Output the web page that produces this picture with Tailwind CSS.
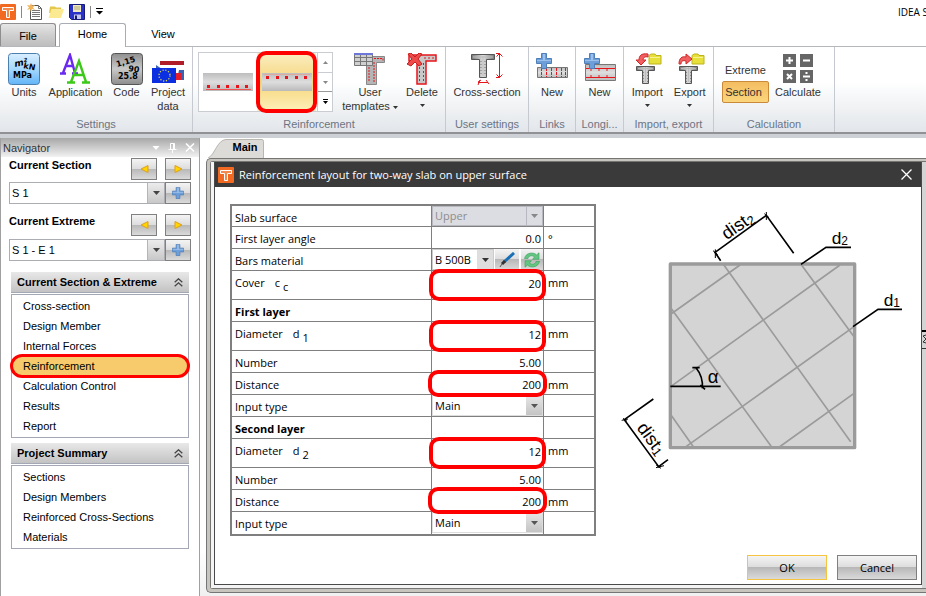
<!DOCTYPE html>
<html lang="en">
  <head>
    <meta charset="UTF-8" />
    <meta name="viewport" content="width=device-width, initial-scale=1.0" />
    <title>IDEA StatiCa</title>
    <script src="https://cdn.jsdelivr.net/npm/@tailwindcss/browser@4"></script>
  </head>

  <body class="h-screen overflow-hidden flex flex-col bg-white font-['Liberation_Sans',sans-serif] text-[11px] leading-[14px] text-black">
    <!-- shared symbols -->
    <svg class="absolute size-0">
      <defs>
        <linearGradient id="steel" x1="0" y1="0" x2="0" y2="1">
          <stop offset="0" stop-color="#bdbdbd" />
          <stop offset=".5" stop-color="#dedede" />
          <stop offset="1" stop-color="#bababa" />
        </linearGradient>
        <linearGradient id="column" x1="0" y1="0" x2="1" y2="0">
          <stop offset="0" stop-color="#777" />
          <stop offset=".5" stop-color="#ddd" />
          <stop offset="1" stop-color="#777" />
        </linearGradient>
        <linearGradient id="blueTile" x1="0" y1="0" x2="0" y2="1">
          <stop offset="0" stop-color="#d9efff" />
          <stop offset=".5" stop-color="#a6d8fd" />
          <stop offset="1" stop-color="#62b5f8" />
        </linearGradient>
        <linearGradient id="greyTile" x1="0" y1="0" x2="0" y2="1">
          <stop offset="0" stop-color="#8f8f8f" />
          <stop offset=".5" stop-color="#c9c9c9" />
          <stop offset="1" stop-color="#8d8d8d" />
        </linearGradient>
      </defs>
      <symbol id="logo" viewBox="0 0 16 16">
        <rect width="16" height="16" rx="1" fill="#f26a21" />
        <path d="M2.5 3.5h11v3h-4v7h-3v-7h-4z" fill="#f58a4d" stroke="#fff" stroke-width="1" />
      </symbol>
      <symbol id="plus" viewBox="0 0 16 16">
        <path d="M5.500.500h5v5h5v5h-5v5h-5v-5h-5v-5h5z" fill="#6f9fd8" stroke="#4f7fb8" />
        <path d="M7 1h2v6h6v1H1V7h6z" fill="#9cc0ea" />
      </symbol>
      <symbol id="tee" viewBox="0 0 20 20">
        <path d="M.5 1.500h18v4h-6v13h-6v-13h-6z" fill="url(#column)" stroke="#555" />
        <path d="M2 3.500h15M9.500 2v15" stroke="#bbb" />
        <path d="M7.500 7v11M11.500 7v11" stroke="#888" stroke-dasharray="1 2" />
      </symbol>
      <symbol id="chevrons" viewBox="0 0 9 9">
        <path d="M.7 4.300 4.500.8l3.800 3.500M.7 8.300l3.800-3.500 3.800 3.500" fill="none" stroke="#444" stroke-width="1.300" />
      </symbol>
      <symbol id="folder" viewBox="0 0 14 12">
        <path d="M1 2.500 3 1h4l1 1.500h5v8.500H1z" fill="#e8e03a" stroke="#bdb41c" />
        <path d="M2 4.500h10" stroke="#f6f290" />
      </symbol>
      <symbol id="caret" viewBox="0 0 7 4">
        <path d="M0 0h7L3.500 4z" fill="currentColor" />
      </symbol>
    </svg>

    <!-- quick access -->
    <header class="h-[23px] shrink-0 flex items-center gap-[5px] whitespace-nowrap">
      <svg class="size-4"><use href="#logo" /></svg>
      <span class="w-px h-3 bg-[#888]"></span>
      <button title="New">
        <svg class="w-4 h-[17px]" viewBox="0 0 16 17">
          <path d="M3.500 2.500h8l3 3v11h-11z" fill="#fff" stroke="#555" />
          <path d="M11.500 2.500v3h3M5 7.500h8M5 9.500h8M5 11.500h8M5 13.500h8" fill="none" stroke="#777" />
          <path d="m4 0 1 2.500L8 2 6 4.500 8 7 5 6 4 9 3 6 0 7l2-2.500L0 2l3 .5z" fill="#f3b55a" />
        </svg>
      </button>
      <button title="Open">
        <svg class="w-4 h-[14px]" viewBox="0 0 16 14">
          <path d="M2 1.500h5l1 1h5V8H1z" fill="#e4c84c" />
          <path d="M3.500 4H16l-3 9H.5z" fill="#fbea92" />
        </svg>
      </button>
      <button title="Save">
        <svg class="size-4" viewBox="0 0 16 16">
          <path d="M.5.500h15v15h-13l-2-2z" fill="#2b32c8" stroke="#161a78" />
          <path d="M4 1h8v7H4z" fill="#efe9c4" />
          <path d="M5 3h6M5 5h6" stroke="#b3aa73" />
          <path d="M5 10.500h7V15H5z" fill="#c5c9ee" />
          <path d="M6 11.500h2V15H6z" fill="#161a78" />
        </svg>
      </button>
      <span class="w-px h-3 bg-[#888]"></span>
      <button title="Customize">
        <svg class="w-[7px] h-[7px]" viewBox="0 0 7 7"><path d="M0 0h7v1H0zM0 3h7L3.500 6.500z" /></svg>
      </button>
      <span class="ml-auto w-7 font-['Open_Sans',sans-serif] text-[10px]">IDEA S</span>
    </header>

    <!-- tabs -->
    <nav class="h-6 shrink-0 flex items-stretch border-b border-[#b4b8bd]">
      <button class="w-14 pt-px border border-b-0 border-[#8e8e8e] rounded-t-[3px] bg-linear-to-b from-[#e6e6e6] via-[#cfcfcf] to-[#bdbdbd]">File</button>
      <button class="ml-[3px] w-[67px] -mb-px pb-1 border border-b-0 border-[#a9adb3] rounded-t-[3px] bg-white">Home</button>
      <button class="w-[74px] pb-0.5">View</button>
    </nav>

    <!-- ribbon -->
    <div class="h-[85px] shrink-0 flex bg-linear-to-b from-white from-40% to-[#e2e6ea] text-[#333]">
      <section class="w-[193px] shrink-0 flex flex-col justify-between border-r border-[#c6cad0] pt-1.5 pb-px">
        <div class="flex">
          <button class="w-12 flex flex-col items-center">
            <svg class="size-8" viewBox="0 0 32 32">
              <rect x=".5" y=".5" width="31" height="31" rx="3" fill="url(#blueTile)" stroke="#4a7fae" />
              <g font-family="DejaVu Sans" font-weight="bold" fill="#000">
                <text x="7" y="14" font-size="9" font-style="italic" transform="rotate(-12 7 14)">m²</text>
                <text x="15" y="15" font-size="8" transform="rotate(12 15 15)">kN</text>
                <text x="5" y="25" font-size="8">MPa</text>
              </g>
            </svg>
            Units
          </button>
          <button class="w-[55px] flex flex-col items-center">
            <svg class="size-8" viewBox="0 0 32 32" fill="none">
              <path d="m3 20 7-18 5 18M6 13h8M0 20.500h6M12 20.500h6" stroke="#6a28f0" stroke-width="2.400" />
              <path d="m11 29 8-21 7 21M14 22h10M7 29.500h8M22 29.500h8" stroke="#3cc818" stroke-width="2.400" />
            </svg>
            Application
          </button>
          <button class="w-[47px] flex flex-col items-center">
            <svg class="size-8" viewBox="0 0 32 32">
              <rect x=".5" y=".5" width="31" height="31" rx="3" fill="url(#greyTile)" stroke="#555" />
              <g font-family="DejaVu Sans" font-weight="bold" fill="#000">
                <text x="6" y="14" font-size="8" transform="rotate(-16 6 14)">1,15</text>
                <text x="17" y="18" font-size="8" transform="rotate(8 17 18)">90</text>
                <text x="7" y="26" font-size="8">25.8</text>
              </g>
            </svg>
            Code
          </button>
          <button class="w-9 flex flex-col items-center">
            <svg class="size-8" viewBox="0 0 32 32">
              <path d="M8 8h24v4H8z" fill="#b01c28" />
              <path d="M5 12h24v4H5z" fill="#fff" />
              <path d="m4 12 6 4H4zM27 17h5v10h-7z" fill="#3a62b0" />
              <path d="M24 20h5v7h-5z" fill="#e2202c" />
              <path d="M0 15h24v15H0z" fill="#0b2fe0" />
              <circle cx="12.500" cy="22.500" r="5.500" fill="none" stroke="#d8d84a" stroke-width="1.300" stroke-dasharray="1.200 1.700" />
            </svg>
            <span>Project<br />data</span>
          </button>
        </div>
        <h2 class="text-center text-[#6c7484]">Settings</h2>
      </section>

      <section class="w-[253px] shrink-0 flex flex-col justify-between border-r border-[#c6cad0] pt-[5px] pb-px">
        <div class="flex pl-[5px]">
          <div class="flex w-[135px] h-[60px] border border-[#c9ccd1] bg-white">
            <button class="w-[58px] flex items-center justify-center" title="Lower surface">
              <svg class="w-[50px] h-[18px]" viewBox="0 0 50 18">
                <path d="M0 0h50v18H0z" fill="url(#steel)" />
                <path d="M3 16.500h45" stroke="#e55" />
                <path d="M4 12h3v3H4zM14 12h3v3h-3zM23 12h3v3h-3zM33 12h3v3h-3zM42 12h3v3h-3z" fill="#e8141c" />
              </svg>
            </button>
            <button class="relative w-[59px] flex items-center justify-center bg-linear-to-b from-[#fbeec2] via-[#f6d57a] to-[#fdf0b8]" title="Upper surface">
              <svg class="w-[50px] h-[18px]" viewBox="0 0 50 18">
                <path d="M0 0h50v18H0z" fill="url(#steel)" />
                <path d="M2 1.500h46" stroke="#dba9a0" />
                <path d="M4 3h3v3H4zM14 3h3v3h-3zM23 3h3v3h-3zM33 3h3v3h-3zM42 3h3v3h-3z" fill="#e8141c" />
              </svg>
              <span class="absolute -inset-x-px -inset-y-0.5 border-4 border-[#f00] rounded-[10px]"></span>
            </button>
            <div class="flex-1 flex flex-col ml-px border-l border-[#c9ccd1] text-[#888]">
              <button class="flex-1 flex items-center justify-center" title="Up"><svg class="w-[5px] h-[3px] rotate-180"><use href="#caret" /></svg></button>
              <button class="flex-1 flex items-center justify-center border-t border-[#c9ccd1]" title="Down"><svg class="w-[5px] h-[3px]"><use href="#caret" /></svg></button>
              <button class="flex-1 flex items-center justify-center border-t border-[#999] text-black" title="More">
                <svg class="w-[5px] h-[5px]" viewBox="0 0 5 5"><path d="M0 0h5v1H0zM0 2h5L2.500 5z" fill="currentColor" /></svg>
              </button>
            </div>
          </div>
          <button class="ml-2 w-[58px] flex flex-col items-center pt-px">
            <svg class="size-8" viewBox="0 0 32 32">
              <path d="M12.500 3.500h18v6h-8v22h-10z" fill="#b5b5b5" stroke="#888" />
              <path d="M14 5.500h15v2M15 11v18M20 9v20" fill="none" stroke="#e8141c" stroke-dasharray="2 1" />
              <path d="M.5.500h18v12H.5z" fill="#cfcfcf" stroke="#777" />
              <path d="M0 1h19" stroke="#6b78d8" stroke-width="2" />
              <path d="M.5 4.500h18M.5 8.500h18M6.500 2v10.500M12.500 2v10.500" stroke="#777" />
            </svg>
            <span class="whitespace-nowrap">User<br />templates <svg class="inline w-[5px] h-[3px]"><use href="#caret" /></svg></span>
          </button>
          <button class="w-[46px] flex flex-col items-center pt-px">
            <svg class="size-8" viewBox="0 0 32 32">
              <path d="M3 2h27v6H20v23h-9V8H3z" fill="#c8c8c8" stroke="#e8141c" stroke-width="1.500" />
              <path d="M13.500 10v18M17.500 10v18M18 5h10" stroke="#e8141c" stroke-dasharray="2 2" />
              <path d="m2 1 3-1 4 4 4-4 3 1-4 5 4 5-3 2-4-4-4 4-4-2 5-5z" fill="#ef4a4a" stroke="#c42020" />
            </svg>
            Delete
            <svg class="mt-[5px] w-[5px] h-[3px]"><use href="#caret" /></svg>
          </button>
        </div>
        <h2 class="text-center text-[#6c7484]">Reinforcement</h2>
      </section>

      <section class="w-[83px] shrink-0 flex flex-col justify-between border-r border-[#c6cad0] pt-1.5 pb-px">
        <button class="flex flex-col items-center whitespace-nowrap">
          <svg class="size-8" viewBox="0 0 32 32">
            <path d="M.5 1.500h23v5h-8v18h-7v-18h-8z" fill="url(#column)" stroke="#555" />
            <path d="M2 4h20M12 3v20" stroke="#bbb" />
            <path d="M10 8v15M14 8v15" stroke="#777" stroke-dasharray="1 2" />
            <path d="M28.500 1v23M25.500 3.500l3-3 3 3M25.500 21.500l3 3 3-3M25 .5h4M25 24.500h4M7 29.500h10M9 27l-2 5M15 27l3 4M7 29l3-2" fill="none" stroke="#e8141c" />
          </svg>
          Cross-section
        </button>
        <h2 class="text-center text-[#6c7484]">User settings</h2>
      </section>

      <section class="w-[47px] shrink-0 flex flex-col justify-between border-r border-[#c6cad0] pt-1.5 pb-px">
        <button class="flex flex-col items-center">
          <svg class="size-8" viewBox="0 0 32 32">
            <path d="M1.500 14.500h30v10h-30z" fill="url(#steel)" stroke="#777" />
            <path d="M5.500 15v9M10.500 15v9M15.500 15v9M20.500 15v9M25.500 15v9M29.500 15v9" stroke="#e8141c" stroke-dasharray="3 1" />
            <use href="#plus" width="16" height="16" />
          </svg>
          New
        </button>
        <h2 class="text-center text-[#6c7484]">Links</h2>
      </section>

      <section class="w-12 shrink-0 flex flex-col justify-between border-r border-[#c6cad0] pt-1.5 pb-px">
        <button class="flex flex-col items-center">
          <svg class="size-8" viewBox="0 0 32 32">
            <path d="M1.500 11.500h30v16h-30z" fill="url(#steel)" stroke="#777" />
            <path d="M2 15.500h29M2 24.500h29" stroke="#e8141c" />
            <path d="M6 17h2m6 0h2m6 0h2M6 23h2m6 0h2m6 0h2" stroke="#e8141c" />
            <use href="#plus" width="16" height="16" />
          </svg>
          New
        </button>
        <h2 class="text-center text-[#6c7484]">Longi...</h2>
      </section>

      <section class="w-[90px] shrink-0 flex flex-col justify-between border-r border-[#c6cad0] pt-1.5 pb-px">
        <div class="flex px-0.5">
          <button class="flex-1 flex flex-col items-center">
            <svg class="size-8" viewBox="0 0 32 32">
              <use href="#tee" x="5" y="12" width="20" height="20" />
              <use href="#folder" x="17" width="14" height="12" />
              <path d="M17 1C10 0 8 3 8 7H5l5 5 5-5h-3c0-2 2-4 5-3z" fill="#f06060" stroke="#d02828" />
            </svg>
            Import
            <svg class="mt-[5px] w-[5px] h-[3px]"><use href="#caret" /></svg>
          </button>
          <button class="flex-1 flex flex-col items-center">
            <svg class="size-8" viewBox="0 0 32 32">
              <use href="#tee" x="5" y="12" width="20" height="20" />
              <use href="#folder" x="17" width="14" height="12" />
              <path d="M5 11C5 5 8 3 12 4V1l6 5-6 5V8C9 7 7 8 7 11z" fill="#f06060" stroke="#d02828" />
            </svg>
            Export
            <svg class="mt-[5px] w-[5px] h-[3px]"><use href="#caret" /></svg>
          </button>
        </div>
        <h2 class="text-center text-[#6c7484]">Import, export</h2>
      </section>

      <section class="w-[121px] shrink-0 flex flex-col justify-between border-r border-[#c6cad0] pt-1.5 pb-px">
        <div class="flex">
          <div class="ml-2 w-[47px] flex flex-col gap-1 pt-2.5">
            <button>Extreme</button>
            <button class="h-[22px] pr-1 border border-[#c98a3a] rounded-[2px] bg-linear-to-b from-[#f4bd62] to-[#fbd67c]">Section</button>
          </div>
          <button class="ml-1.5 w-[46px] flex flex-col items-center">
            <svg class="size-8" viewBox="0 0 32 32">
              <path d="M1 1h13v13H1zM18 1h13v13H18zM1 17h13v13H1zM18 17h13v13H18z" fill="#666" />
              <path d="M4 7.500h7M7.500 4v7M21 7.500h7M5 21l5 5M10 21l-5 5M21 23.500h7" stroke="#fff" stroke-width="2" />
              <path d="M23.500 19h2v2h-2zM23.500 26h2v2h-2z" fill="#fff" />
            </svg>
            Calculate
          </button>
        </div>
        <h2 class="text-center text-[#6c7484]">Calculation</h2>
      </section>
    </div>
    <div class="h-[6px] shrink-0 border-t-2 border-[#8f9194] bg-[#cdd1d6]"></div>

    <div class="flex-1 min-h-0 flex">
      <!-- navigator -->
      <aside class="w-[200px] shrink-0 border-x border-[#a0a0a0] bg-white">
        <div class="h-[19px] flex items-center pl-0.5 pr-1 bg-linear-to-b from-[#a8a8a8] to-[#f2f2f2] text-[#333]">
          <h2>Navigator</h2>
          <div class="ml-auto flex items-center gap-2 text-white">
            <button title="Options"><svg class="w-2 h-1"><use href="#caret" /></svg></button>
            <button title="Pin"><svg class="w-[9px] h-[10px]" viewBox="0 0 9 10"><path d="M2.500 6V.5h4V6M.5 6.500h8M4.500 7v3M5.500 1v5" fill="none" stroke="#fff" /></svg></button>
            <button title="Close"><svg class="w-[10px] h-[9px]" viewBox="0 0 10 9"><path d="m1 .5 8 8m0-8-8 8" stroke="#fff" stroke-width="1.500" /></svg></button>
          </div>
        </div>

        <div class="pl-2 pr-2">
          <div class="flex h-[25px] pt-px gap-2">
            <label for="section" class="mr-auto font-bold">Current Section</label>
            <button class="w-[26px] h-[22px] flex items-center justify-center border border-[#808080] bg-[linear-gradient(#f4f4f4,#dcdcdc_50%,#b8b8b8_50%,#dadada)]" title="Previous section">
              <svg class="w-[9px] h-2" viewBox="0 0 9 8"><path d="M8 .5v7L1 4z" fill="#ffd400" stroke="#e0a010" /></svg>
            </button>
            <button class="w-[26px] h-[22px] flex items-center justify-center border border-[#808080] bg-[linear-gradient(#f4f4f4,#dcdcdc_50%,#b8b8b8_50%,#dadada)]" title="Next section">
              <svg class="w-[9px] h-2" viewBox="0 0 9 8"><path d="M1 .5v7L8 4z" fill="#ffd400" stroke="#e0a010" /></svg>
            </button>
          </div>
          <div class="flex h-[22px]">
            <div class="relative flex-1 border border-[#abadb3]">
              <select id="section" class="appearance-none w-full h-full pl-0.5 bg-white"><option>S 1</option></select>
              <span class="pointer-events-none absolute right-0 inset-y-0 w-[17px] flex items-center justify-center border-l border-[#b5b5b5] bg-linear-to-b from-[#ececec] to-[#c8c8c8] text-[#444]"><svg class="w-[7px] h-1"><use href="#caret" /></svg></span>
            </div>
            <button class="w-[26px] flex items-center justify-center border border-[#808080] bg-[linear-gradient(#f4f4f4,#dcdcdc_50%,#b8b8b8_50%,#dadada)]" title="Add section"><svg class="size-3"><use href="#plus" /></svg></button>
          </div>

          <div class="flex h-[25px] mt-2.5 gap-2">
            <label for="extreme" class="mr-auto font-bold">Current Extreme</label>
            <button class="w-[26px] h-[22px] flex items-center justify-center border border-[#808080] bg-[linear-gradient(#f4f4f4,#dcdcdc_50%,#b8b8b8_50%,#dadada)]" title="Previous extreme">
              <svg class="w-[9px] h-2" viewBox="0 0 9 8"><path d="M8 .5v7L1 4z" fill="#ffd400" stroke="#e0a010" /></svg>
            </button>
            <button class="w-[26px] h-[22px] flex items-center justify-center border border-[#808080] bg-[linear-gradient(#f4f4f4,#dcdcdc_50%,#b8b8b8_50%,#dadada)]" title="Next extreme">
              <svg class="w-[9px] h-2" viewBox="0 0 9 8"><path d="M1 .5v7L8 4z" fill="#ffd400" stroke="#e0a010" /></svg>
            </button>
          </div>
          <div class="flex h-[22px]">
            <div class="relative flex-1 border border-[#abadb3]">
              <select id="extreme" class="appearance-none w-full h-full pl-0.5 bg-white"><option>S 1 - E 1</option></select>
              <span class="pointer-events-none absolute right-0 inset-y-0 w-[17px] flex items-center justify-center border-l border-[#b5b5b5] bg-linear-to-b from-[#ececec] to-[#c8c8c8] text-[#444]"><svg class="w-[7px] h-1"><use href="#caret" /></svg></span>
            </div>
            <button class="w-[26px] flex items-center justify-center border border-[#808080] bg-[linear-gradient(#f4f4f4,#dcdcdc_50%,#b8b8b8_50%,#dadada)]" title="Add extreme"><svg class="size-3"><use href="#plus" /></svg></button>
          </div>
        </div>

        <div class="mx-2.5 mt-[11px] flex flex-col">
          <h3 class="h-[21px] flex items-center justify-between pl-1.5 pr-1.5 border-b border-[#a4a7b4] bg-linear-to-b from-[#e8e8e8] to-[#c3c3c3] font-bold">
            Current Section &amp; Extreme <svg class="size-[9px]"><use href="#chevrons" /></svg>
          </h3>
          <ul class="mt-px pt-px pb-px border border-[#a4a7b4] leading-5">
            <li class="pl-[11px]"><a href="#">Cross-section</a></li>
            <li class="pl-[11px]"><a href="#">Design Member</a></li>
            <li class="pl-[11px]"><a href="#">Internal Forces</a></li>
            <li class="relative pl-[11px] bg-[#f7cb6b] rounded-[10px]">
              <a href="#">Reinforcement</a>
              <span class="absolute -inset-x-0.5 -inset-y-0.5 border-[3px] border-[#f00] rounded-xl"></span>
            </li>
            <li class="pl-[11px]"><a href="#">Calculation Control</a></li>
            <li class="pl-[11px]"><a href="#">Results</a></li>
            <li class="pl-[11px]"><a href="#">Report</a></li>
          </ul>
          <h3 class="mt-[5px] h-[21px] flex items-center justify-between pl-1.5 pr-1.5 border-b border-[#a4a7b4] bg-linear-to-b from-[#e8e8e8] to-[#c3c3c3] font-bold">
            Project Summary <svg class="size-[9px]"><use href="#chevrons" /></svg>
          </h3>
          <ul class="mt-px pt-px pb-px border border-[#a4a7b4] leading-5">
            <li class="pl-[11px]"><a href="#">Sections</a></li>
            <li class="pl-[11px]"><a href="#">Design Members</a></li>
            <li class="pl-[11px]"><a href="#">Reinforced Cross-Sections</a></li>
            <li class="pl-[11px]"><a href="#">Materials</a></li>
          </ul>
        </div>
      </aside>

      <!-- document -->
      <main class="flex-1 min-w-0 flex flex-col pl-1.5 pb-[3px] bg-linear-to-b from-white from-90% to-[#f0f0f0]">
        <div class="h-5 shrink-0 flex items-end pl-0.5">
          <button class="relative w-14 h-[19px] pb-1">
            <svg class="absolute inset-0 w-full h-full" viewBox="0 0 56 19"><path d="M0 19C7 16 9 1 18 .5h36q1.500 0 1.500 2V19" fill="#dddbd7" stroke="#b9b6b0" /></svg>
            <span class="relative pl-[18px] font-bold">Main</span>
          </button>
        </div>
        <div class="flex-1 min-h-0 flex border border-r-0 border-[#757575] rounded-l-[5px] bg-[#c8c5bf] pl-[3px] pt-0.5 pb-[3px]">
          <div class="flex-1 min-w-0 flex border border-r-0 border-[#757575] rounded-l-[3px] bg-[#d4d4d4]">
            <div class="flex-1 min-w-0 flex flex-col border-l-[3px] border-b-[3px] border-[#f4f4f4] font-['Open_Sans',sans-serif]">
              <div class="flex-1 flex flex-col border border-t-0 border-[#4a4a4a] bg-white">
                <div class="h-[25px] shrink-0 flex items-center gap-[5px] pl-[3px] pr-[9px] bg-[#3a3a3a] text-white">
                  <svg class="size-4"><use href="#logo" /></svg>
                  <h1>Reinforcement layout for two-way slab on upper surface</h1>
                  <button class="ml-auto" title="Close"><svg class="size-[11px]" viewBox="0 0 11 11"><path d="m.5.500 10 10m0-10-10 10" stroke="#fff" stroke-width="1.300" /></svg></button>
                </div>

                <div class="flex-1 flex items-start pl-[15px] pt-[17px]">
                  <table class="w-[366px] shrink-0 table-fixed border-separate border-spacing-0 border-2 border-[#7f7f7f] leading-4 [&_th]:border-r [&_th]:border-b [&_th]:border-[#7f7f7f] [&_td]:border-b [&_td]:border-[#7f7f7f] [&_th]:text-left [&_th]:font-normal [&_th]:pl-[3px] [&_th]:pb-0 [&_th]:pt-1 [&_td]:p-0 [&_th]:align-top [&_td]:align-top">
                    <colgroup>
                      <col class="w-[200px]" />
                      <col class="w-[112px]" />
                      <col class="w-[50px]" />
                    </colgroup>
                    <tbody>
                      <tr class="h-[21px]">
                        <th><label for="surface">Slab surface</label></th>
                        <td class="border-r">
                          <div class="relative h-5 border border-[#b8b8c0]">
                            <select id="surface" disabled class="block appearance-none w-full h-full pl-0.5 bg-[#dcdce3] text-[#8d8d8d]"><option>Upper</option></select>
                            <span class="pointer-events-none absolute right-0 inset-y-0 w-4 flex items-center justify-center border-l border-[#b8b8c0] bg-[#dcdce3] text-[#888]"><svg class="w-[7px] h-1"><use href="#caret" /></svg></span>
                          </div>
                        </td>
                        <td></td>
                      </tr>
                      <tr class="h-[22px]">
                        <th><label for="angle">First layer angle</label></th>
                        <td class="border-r"><input id="angle" type="text" value="0.0" class="block w-full h-[21px] pt-0.5 pr-0.5 text-right" /></td>
                        <td><span class="block pl-1 pt-1">°</span></td>
                      </tr>
                      <tr class="h-[22px]">
                        <th><label for="material">Bars material</label></th>
                        <td class="border-r">
                          <div class="flex h-[21px]">
                            <div class="relative w-[62px] border border-[#ccc]">
                              <select id="material" class="block appearance-none w-full h-full pl-0.5 bg-white"><option>B 500B</option></select>
                              <span class="pointer-events-none absolute right-0 inset-y-0 w-4 flex items-center justify-center bg-[#dedede] text-[#333]"><svg class="w-[7px] h-1"><use href="#caret" /></svg></span>
                            </div>
                            <button class="w-6 ml-px flex items-center justify-center bg-[linear-gradient(#f4f4f4,#dcdcdc_50%,#b8b8b8_50%,#dadada)]" title="Edit">
                              <svg class="size-4" viewBox="0 0 16 16"><path d="m15 1-10 9" stroke="#1b6fb5" stroke-width="3" /><path d="m6 9-3 3" stroke="#333" stroke-width="3" /><path d="m3 12-2 3" stroke="#555" /></svg>
                            </button>
                            <button class="flex-1 ml-0.5 flex items-center justify-center bg-[linear-gradient(#f4f4f4,#dcdcdc_50%,#b8b8b8_50%,#dadada)]" title="Refresh">
                              <svg class="w-[18px] h-4" viewBox="0 0 18 16"><path d="M1.500 6.500C3 0 11 0 13.500 3L16 .8v6.500H9.500L11.500 5C9 3 6 3.500 5 6.500zM16.500 9.500C15 16 7 16 4.500 13L2 15.200V8.700h6.500L6.500 11c2.500 2 5.500 1.500 6.500-1.500z" fill="#62c682" stroke="#35a058" stroke-width=".6" /></svg>
                            </button>
                          </div>
                        </td>
                        <td></td>
                      </tr>
                      <tr class="h-[29px]">
                        <th><label for="cover">Cover<span class="ml-2.5">c</span><span class="relative top-1 ml-[3px]">c</span></label></th>
                        <td class="relative border-r">
                          <input id="cover" type="text" value="20" class="block w-full h-6 pr-0.5 text-right" />
                          <span class="pointer-events-none absolute z-10 -inset-x-[3px] -inset-y-0.5 border-4 border-[#f00] rounded-[10px]"></span>
                        </td>
                        <td><span class="block pl-1 pt-1">mm</span></td>
                      </tr>
                      <tr class="h-[22px]">
                        <th><b>First layer</b></th>
                        <td class="border-r"></td>
                        <td></td>
                      </tr>
                      <tr class="h-[29px]">
                        <th><label for="d1">Diameter<span class="ml-2.5">d</span><span class="relative top-1 ml-[3px]">1</span></label></th>
                        <td class="relative border-r">
                          <input id="d1" type="text" value="12" class="block w-full h-6 pr-0.5 text-right" />
                          <span class="pointer-events-none absolute z-10 -inset-x-[3px] -inset-y-0.5 border-4 border-[#f00] rounded-[10px]"></span>
                        </td>
                        <td><span class="block pl-1 pt-1">mm</span></td>
                      </tr>
                      <tr class="h-[22px]">
                        <th><label for="n1">Number</label></th>
                        <td class="border-r"><input id="n1" type="text" value="5.00" class="block w-full h-[21px] pt-0.5 pr-0.5 text-right" /></td>
                        <td></td>
                      </tr>
                      <tr class="h-[22px]">
                        <th><label for="dist1">Distance</label></th>
                        <td class="relative border-r">
                          <input id="dist1" type="text" value="200" class="block w-full h-[21px] pt-0.5 pr-0.5 text-right" />
                          <span class="pointer-events-none absolute z-10 -inset-x-1 -inset-y-[3px] border-4 border-[#f00] rounded-[10px]"></span>
                        </td>
                        <td><span class="block pl-1 pt-1">mm</span></td>
                      </tr>
                      <tr class="h-[22px]">
                        <th><label for="type1">Input type</label></th>
                        <td class="border-r">
                          <div class="relative h-[21px] border border-[#ddd]">
                            <select id="type1" class="block appearance-none w-full h-full pl-0.5 bg-white"><option>Main</option></select>
                            <span class="pointer-events-none absolute right-0 inset-y-0 w-4 flex items-center justify-center bg-linear-to-b from-[#e6e6e6] to-[#c4c4c4] text-[#555]"><svg class="w-[7px] h-1"><use href="#caret" /></svg></span>
                          </div>
                        </td>
                        <td></td>
                      </tr>
                      <tr class="h-[22px]">
                        <th><b>Second layer</b></th>
                        <td class="border-r"></td>
                        <td></td>
                      </tr>
                      <tr class="h-[29px]">
                        <th><label for="d2">Diameter<span class="ml-2.5">d</span><span class="relative top-1 ml-[3px]">2</span></label></th>
                        <td class="relative border-r">
                          <input id="d2" type="text" value="12" class="block w-full h-6 pr-0.5 text-right" />
                          <span class="pointer-events-none absolute z-10 -inset-x-[3px] -inset-y-0.5 border-4 border-[#f00] rounded-[10px]"></span>
                        </td>
                        <td><span class="block pl-1 pt-1">mm</span></td>
                      </tr>
                      <tr class="h-[22px]">
                        <th><label for="n2">Number</label></th>
                        <td class="border-r"><input id="n2" type="text" value="5.00" class="block w-full h-[21px] pt-0.5 pr-0.5 text-right" /></td>
                        <td></td>
                      </tr>
                      <tr class="h-[22px]">
                        <th><label for="dist2">Distance</label></th>
                        <td class="relative border-r">
                          <input id="dist2" type="text" value="200" class="block w-full h-[21px] pt-0.5 pr-0.5 text-right" />
                          <span class="pointer-events-none absolute z-10 -inset-x-1 -inset-y-[3px] border-4 border-[#f00] rounded-[10px]"></span>
                        </td>
                        <td><span class="block pl-1 pt-1">mm</span></td>
                      </tr>
                      <tr class="h-[22px] [&>*]:border-b-0!">
                        <th><label for="type2">Input type</label></th>
                        <td class="border-r">
                          <div class="relative h-[21px] border border-[#ddd]">
                            <select id="type2" class="block appearance-none w-full h-full pl-0.5 bg-white"><option>Main</option></select>
                            <span class="pointer-events-none absolute right-0 inset-y-0 w-4 flex items-center justify-center bg-linear-to-b from-[#e6e6e6] to-[#c4c4c4] text-[#555]"><svg class="w-[7px] h-1"><use href="#caret" /></svg></span>
                          </div>
                        </td>
                        <td></td>
                      </tr>
                    </tbody>
                  </table>

                  <!-- slab scheme -->
                  <svg class="ml-3.5 mt-[-4px] w-[300px] h-[280px] shrink-0" viewBox="0 0 900 840" fill="none">
                    <path d="M181 192h553v551H181z" fill="#d4d4d4" />
                    <path d="M183 342 390 195M183 559 690 195M228 740 732 380M508 741 732 580M183 325 485 741M340 193 722 725M573 193 732 410M183 645 250 740" stroke="#9b9b9b" stroke-width="5" />
                    <path d="M181 192h553v551H181z" stroke="#9b9b9b" stroke-width="10" stroke-linejoin="round" />
                    <g stroke="#000" stroke-width="5">
                      <path d="M332 182 315 157 469 46 551 160M573 193 648 142H723M729 380 804 328H876M181 559H332M130 597 43 659 146 800 174 779" />
                      <path d="M247 503h22M258 503Q280 530 277 565M271 555l14 13" />
                      <path d="M309 152l14 12M316 148v26M463 41l14 12M469 36v24M35 661l19-4M39 655l12 9M138 803l24-6M139 796l14 9" stroke-width="3" />
                    </g>
                    <g fill="#000" font-family="Liberation Sans" font-size="54">
                      <text x="350" y="121" transform="rotate(-35 350 121)">dist<tspan font-size="38" dy="6">2</tspan></text>
                      <text x="79" y="684" transform="rotate(54 79 684)">dist<tspan font-size="38" dy="6">1</tspan></text>
                      <text x="665" y="131" font-size="52">d<tspan font-size="36" dy="4">2</tspan></text>
                      <text x="821" y="317" font-size="52">d<tspan font-size="36" dy="4">1</tspan></text>
                      <text x="293" y="550" font-size="56">α</text>
                    </g>
                  </svg>
                </div>

                <div class="shrink-0 flex justify-end gap-2.5 pr-1 pb-1">
                  <button class="w-20 h-[25px] border border-[#f5c542] bg-[linear-gradient(#f4f4f4,#dcdcdc_50%,#b8b8b8_50%,#dadada)]">OK</button>
                  <button class="w-20 h-[25px] border border-[#808080] bg-[linear-gradient(#f4f4f4,#dcdcdc_50%,#b8b8b8_50%,#dadada)]">Cancel</button>
                </div>
              </div>
            </div>
            <!-- edge of the drawing behind the dialog -->
            <svg class="w-1 shrink-0 self-start mt-[168px] h-5" viewBox="0 0 4 20" fill="none"><path d="M0 1h4" stroke="#000" stroke-width="2" /><path d="M4 5 1 6l3 3-3 3 3 1M0 18.500h4" stroke="#333" /></svg>
          </div>
        </div>
      </main>
    </div>
  </body>
</html>
